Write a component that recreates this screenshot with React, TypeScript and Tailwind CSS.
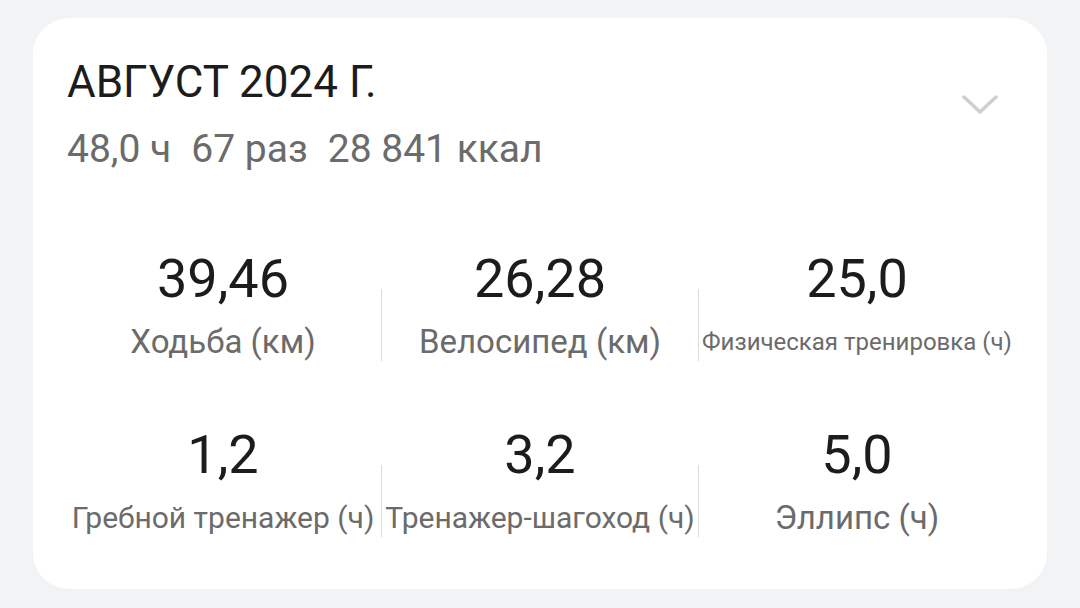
import React from 'react';

type Stat = { value: string; label: string; labelSize: string };

const rows: Stat[][] = [
  [
    { value: '39,46', label: 'Ходьба (км)', labelSize: 'text-[33px]' },
    { value: '26,28', label: 'Велосипед (км)', labelSize: 'text-[33px]' },
    { value: '25,0', label: 'Физическая тренировка (ч)', labelSize: 'text-[24px]' },
  ],
  [
    { value: '1,2', label: 'Гребной тренажер (ч)', labelSize: 'text-[30px]' },
    { value: '3,2', label: 'Тренажер-шагоход (ч)', labelSize: 'text-[30px]' },
    { value: '5,0', label: 'Эллипс (ч)', labelSize: 'text-[33px]' },
  ],
];

const StatCell: React.FC<{ stat: Stat }> = ({ stat }) => (
  <div className="flex flex-col items-center min-w-0">
    <div className="text-[54px] leading-[64px] text-[#1c1c1c]">{stat.value}</div>
    <div className={`${stat.labelSize} leading-[38px] mt-[12px] text-[#6b6b6b] whitespace-nowrap`}>
      {stat.label}
    </div>
  </div>
);

const Divider: React.FC = () => <div className="self-end h-[72px] w-px bg-[#dcdcdc]" />;

export default function App() {
  return (
    <div
      className="w-[1080px] h-[608px] bg-[#f2f3f5] pt-[18px] px-[33px] overflow-hidden"
      style={{ fontFamily: 'Roboto, "Noto Sans", sans-serif' }}
    >
      <div className="h-[571px] bg-white rounded-[36px]">
        <header className="flex justify-between pt-[38px] pl-[34px] pr-[49px]">
          <div className="flex flex-col">
            <h1 className="text-[44px] leading-[52px] text-[#1c1c1c]">АВГУСТ 2024 Г.</h1>
            <p className="flex text-[39px] leading-[46px] mt-[18px] text-[#6b6b6b] whitespace-nowrap">
              <span>48,0 ч</span>
              <span className="ml-[20px]">67 раз</span>
              <span className="ml-[20px]">28 841 ккал</span>
            </p>
          </div>
          <svg width="36" height="20" viewBox="0 0 36 20" className="mt-[39px]" fill="none">
            <path
              d="M2 2 L18 17 L34 2"
              stroke="#cfcfcf"
              strokeWidth="3.5"
              strokeLinecap="round"
              strokeLinejoin="round"
            />
          </svg>
        </header>

        <div className="flex flex-col gap-[62px] px-[32px] mt-[75px]">
          {rows.map((row, i) => (
            <div key={i} className="grid grid-cols-[1fr_1px_1fr_1px_1fr]">
              <StatCell stat={row[0]} />
              <Divider />
              <StatCell stat={row[1]} />
              <Divider />
              <StatCell stat={row[2]} />
            </div>
          ))}
        </div>
      </div>
    </div>
  );
}
